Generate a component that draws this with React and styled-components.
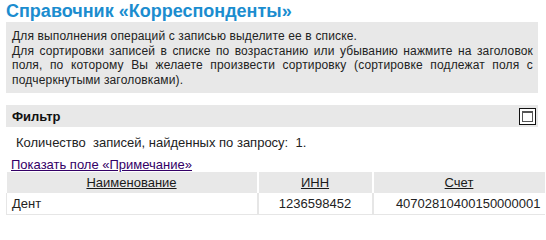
import React from "react";
import styled, { createGlobalStyle } from "styled-components";

const Global = createGlobalStyle`
  html, body { margin: 0; padding: 0; background: #fff; }
  body { font-family: Arial, "Liberation Sans", sans-serif; font-size: 13px; color: #222; }
`;

const Page = styled.div`
  padding: 0 0 0 6px;
  width: 540px;
`;

const Title = styled.h1`
  margin: 0;
  font-size: 18px;
  line-height: 22px;
  font-weight: bold;
  color: #1b8dcf;
  white-space: nowrap;
`;

const InfoBox = styled.div`
  width: 532px;
  box-sizing: border-box;
  background: #e8e8e8;
  padding: 7px 5px 6px 6px;
  font-size: 12px;
  letter-spacing: 0.15px;
  line-height: 14.5px;
  text-align: justify;
`;

const Para = styled.p`
  margin: 0;
`;

const FilterBar = styled.div`
  margin-top: 12px;
  width: 532px;
  height: 22px;
  box-sizing: border-box;
  background: #e8e8e8;
  display: flex;
  align-items: center;
  justify-content: space-between;
  padding: 0 2px 0 6px;
`;

const FilterTitle = styled.span`
  font-weight: bold;
  font-size: 13px;
  color: #111;
`;

const ToggleIcon = styled.span`
  width: 17px;
  height: 17px;
  box-sizing: border-box;
  border: 1.5px solid #111;
  background: #fff;
  display: flex;
  align-items: center;
  justify-content: center;
  &::after {
    content: "";
    width: 11px;
    height: 11px;
    box-sizing: border-box;
    border: 1.5px solid #555;
    border-top-width: 2px;
  }
`;

const CountLine = styled.div`
  padding: 8px 0 0 10px;
  line-height: 16px;
  white-space: pre;
`;

const ShowLink = styled.a`
  display: inline-block;
  margin: 6px 0 0 5px;
  line-height: 15px;
  color: #330066;
  text-decoration: underline;
  cursor: pointer;
`;

const Table = styled.table`
  width: 534px;
  border-collapse: collapse;
  table-layout: fixed;
`;

const HeadCell = styled.th`
  width: ${(p) => p.$w}px;
  height: 21px;
  padding: 0;
  background: #e8e8e8;
  border-left: 2px solid #fff;
  font-weight: normal;
  text-align: center;
  &:first-child { border-left: 0; }
`;

const HeadLink = styled.a`
  color: #1a1a1a;
  text-decoration: underline;
  cursor: pointer;
`;

const Cell = styled.td`
  height: 21px;
  padding: 0 ${(p) => (p.$align === "right" ? 4 : 5)}px;
  border: 1px solid #e6e6e6;
  border-top: 0;
  border-left-width: 2px;
  text-align: ${(p) => p.$align || "left"};
  &:first-child { border-left-width: 1px; }
  &:last-child { border-right: 0; }
`;

export default function App() {
  return (
    <>
      <Global />
      <Page>
        <Title>Справочник «Корреспонденты»</Title>
        <InfoBox>
          <Para>Для выполнения операций с записью выделите ее в списке.</Para>
          <Para>
            Для сортировки записей в списке по возрастанию или убыванию нажмите на заголовок
            поля, по которому Вы желаете произвести сортировку (сортировке подлежат поля с
            подчеркнутыми заголовками).
          </Para>
        </InfoBox>
        <FilterBar>
          <FilterTitle>Фильтр</FilterTitle>
          <ToggleIcon />
        </FilterBar>
        <CountLine>{"Количество  записей, найденных по запросу:  1."}</CountLine>
        <ShowLink>Показать поле «Примечание»</ShowLink>
        <Table>
          <thead>
            <tr>
              <HeadCell $w={250}><HeadLink>Наименование</HeadLink></HeadCell>
              <HeadCell $w={113}><HeadLink>ИНН</HeadLink></HeadCell>
              <HeadCell $w={171}><HeadLink>Счет</HeadLink></HeadCell>
            </tr>
          </thead>
          <tbody>
            <tr>
              <Cell>Дент</Cell>
              <Cell $align="center">1236598452</Cell>
              <Cell $align="right">40702810400150000001</Cell>
            </tr>
          </tbody>
        </Table>
      </Page>
    </>
  );
}
